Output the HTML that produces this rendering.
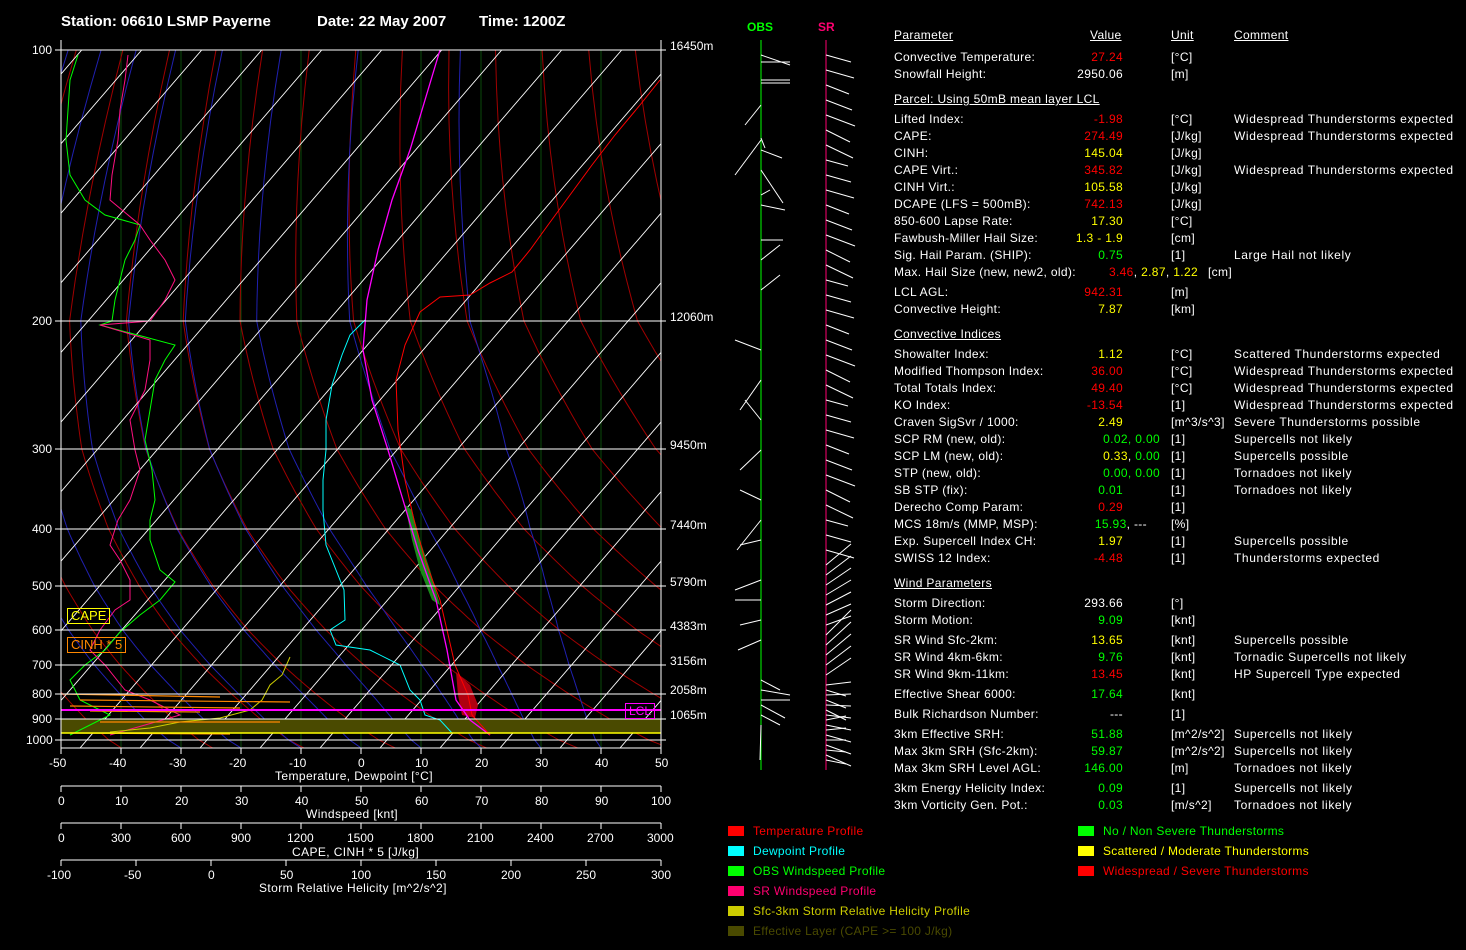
<!DOCTYPE html>
<html><head><meta charset="utf-8"><style>
body{margin:0;background:#000;width:1466px;height:950px;overflow:hidden;position:relative;font-family:"Liberation Sans",sans-serif;color:#fff}
.t{position:absolute;font-size:12px;white-space:nowrap;line-height:14px}
.r{position:absolute;left:894px;width:560px;height:14px;font-size:12px;line-height:14px;white-space:nowrap;letter-spacing:0.35px}
.r span{position:absolute}
.p{left:0}.v{right:331px;text-align:right}.u{left:277px}.c{left:340px;letter-spacing:0.6px}
.h{position:absolute;font-size:12px;text-decoration:underline;white-space:nowrap;letter-spacing:0.35px}
.R{color:#f00}.Y{color:#ff0}.G{color:#0f0}
b{font-weight:normal}
.leg{position:absolute;font-size:12px;white-space:nowrap;letter-spacing:0.3px}
.leg i{position:absolute;left:-25px;top:2px;width:16px;height:10px}
</style></head><body>
<svg id="s" width="1466" height="950" style="position:absolute;left:0;top:0">
<defs><clipPath id="cp"><rect x="61" y="50" width="600" height="698"/></clipPath></defs>
<g id="grid" clip-path="url(#cp)"></g>
<g clip-path="url(#cp)">
<rect x="61" y="719" width="600" height="14" fill="#4a4a00"/>
<polygon points="405,505 412,510 420,540 430,570 440,605 432,600 420,570 412,540" fill="#1a8a1a"/>
<polygon points="456,672 470,685 478,705 475,718 462,715 458,695" fill="#b00010"/>
<polyline fill="none" stroke="#f0f" stroke-width="1.3" points="440,50 425,100 410,150 392,200 378,250 367,300 363,350 372,400 388,450 403,500 418,550 436,600 447,650 456,700 470,720 490,735"/>
<polyline fill="none" stroke="#f00" stroke-width="1" points="660,80 640,105 615,135 592,165 570,195 548,225 530,250 512,272 490,283 470,295 440,297 420,312 405,345 396,380 398,430 405,480 414,520 425,560 440,600 447,630 455,665 468,695 472,715 490,735"/>
<polyline fill="none" stroke="#0ff" stroke-width="1" points="365,320 350,335 342,355 332,385 326,420 326,450 323,480 323,510 326,545 336,570 344,590 345,620 330,630 336,645 370,650 400,665 410,690 420,700 425,715 440,720 452,733"/>
<polyline fill="none" stroke="#0f0" stroke-width="1" points="78,55 70,80 68,110 66,140 70,175 85,200 105,215 140,225 135,240 125,260 120,280 115,300 112,321 100,325 175,345 165,360 155,380 150,410 145,440 152,470 155,500 150,520 150,540 160,570 175,582 160,600 140,615 120,632 105,650 85,665 70,680 80,700 110,715 90,725 70,735"/>
<polyline fill="none" stroke="#ff1080" stroke-width="1" points="128,55 125,80 120,110 118,140 112,175 110,200 140,225 150,240 165,260 175,280 165,300 150,321 100,325 150,340 150,360 145,390 130,420 135,450 140,470 130,500 118,520 110,545 120,560 130,580 130,600 115,610 100,630 90,650 105,665 125,690 150,700 180,715 145,725 110,735"/>
<polyline fill="none" stroke="#cc0" stroke-width="1" points="290,657 282,675 270,685 262,700 250,710 220,718 180,722 150,728 110,732"/>
<g stroke="#f80" stroke-width="1.2">
<line x1="61" y1="694" x2="220" y2="697"/><line x1="80" y1="700" x2="290" y2="702"/><line x1="70" y1="706" x2="240" y2="708"/><line x1="90" y1="711" x2="200" y2="712"/><line x1="100" y1="722" x2="280" y2="722"/><line x1="70" y1="733" x2="230" y2="734"/>
</g>
<line x1="61" y1="733" x2="661" y2="733" stroke="#ff0" stroke-width="1.5"/>
</g>
<line x1="61" y1="710" x2="661" y2="710" stroke="#f0f" stroke-width="2"/>
<g id="ax" stroke="#fff"></g>
<line x1="761" y1="40" x2="761" y2="770" stroke="#0f0"/>
<line x1="826" y1="40" x2="826" y2="770" stroke="#ff0070"/>
<g id="barbs" stroke="#fff" stroke-width="1"></g>
</svg>
<div class="t" style="left:61px;top:15px;font-size:15px;font-weight:bold">Station: 06610 LSMP Payerne</div>
<div class="t" style="left:317px;top:15px;font-size:15px;font-weight:bold">Date: 22 May 2007</div>
<div class="t" style="left:479px;top:15px;font-size:15px;font-weight:bold">Time: 1200Z</div>
<div class="t" style="left:747px;top:20px;color:#0f0;font-weight:bold">OBS</div>
<div class="t" style="left:818px;top:20px;color:#ff0070;font-weight:bold">SR</div>
<div class="t" style="left:32px;top:43px">100</div>
<div class="t" style="left:32px;top:314px">200</div>
<div class="t" style="left:32px;top:442px">300</div>
<div class="t" style="left:32px;top:522px">400</div>
<div class="t" style="left:32px;top:579px">500</div>
<div class="t" style="left:32px;top:623px">600</div>
<div class="t" style="left:32px;top:658px">700</div>
<div class="t" style="left:32px;top:687px">800</div>
<div class="t" style="left:32px;top:712px">900</div>
<div class="t" style="left:26px;top:733px">1000</div>
<div class="t" style="left:670px;top:39px">16450m</div>
<div class="t" style="left:670px;top:310px">12060m</div>
<div class="t" style="left:670px;top:438px">9450m</div>
<div class="t" style="left:670px;top:518px">7440m</div>
<div class="t" style="left:670px;top:575px">5790m</div>
<div class="t" style="left:670px;top:619px">4383m</div>
<div class="t" style="left:670px;top:654px">3156m</div>
<div class="t" style="left:670px;top:683px">2058m</div>
<div class="t" style="left:670px;top:708px">1065m</div>
<div class="t" style="left:67px;top:608px;color:#ff0;border:1px solid #ff0;padding:0 3px;font-size:13px">CAPE</div>
<div class="t" style="left:67px;top:637px;color:#f80;border:1px solid #f80;padding:0 3px;font-size:13px">CINH * 5</div>
<div class="t" style="left:625px;top:703px;color:#f0f;border:1px solid #f0f;padding:0 3px">LCL</div>
<div class="t" style="left:275px;top:769px;letter-spacing:0.4px">Temperature, Dewpoint [°C]</div>
<div class="t" style="left:306px;top:807px;letter-spacing:0.4px">Windspeed [knt]</div>
<div class="t" style="left:292px;top:845px;letter-spacing:0.4px">CAPE, CINH * 5 [J/kg]</div>
<div class="t" style="left:259px;top:881px;letter-spacing:0.4px">Storm Relative Helicity [m^2/s^2]</div>

<div class="leg" style="left:753px;top:824px;color:#f00"><i style="background:#f00"></i>Temperature Profile</div>
<div class="leg" style="left:753px;top:844px;color:#0ff"><i style="background:#0ff"></i>Dewpoint Profile</div>
<div class="leg" style="left:753px;top:864px;color:#0f0"><i style="background:#0f0"></i>OBS Windspeed Profile</div>
<div class="leg" style="left:753px;top:884px;color:#ff0070"><i style="background:#ff0070"></i>SR Windspeed Profile</div>
<div class="leg" style="left:753px;top:904px;color:#cc0"><i style="background:#cc0"></i>Sfc-3km Storm Relative Helicity Profile</div>
<div class="leg" style="left:753px;top:924px;color:#4a4a00"><i style="background:#4a4a00"></i>Effective Layer (CAPE &gt;= 100 J/kg)</div>
<div class="leg" style="left:1103px;top:824px;color:#0f0"><i style="background:#0f0"></i>No / Non Severe Thunderstorms</div>
<div class="leg" style="left:1103px;top:844px;color:#ff0"><i style="background:#ff0"></i>Scattered / Moderate Thunderstorms</div>
<div class="leg" style="left:1103px;top:864px;color:#f00"><i style="background:#f00"></i>Widespread / Severe Thunderstorms</div>

<div class="h" style="left:894px;top:28px">Parameter</div>
<div class="h" style="left:1090px;top:28px">Value</div>
<div class="h" style="left:1171px;top:28px">Unit</div>
<div class="h" style="left:1234px;top:28px">Comment</div>
<div class="r" style="top:50px"><span class="p">Convective Temperature:</span><span class="v R">27.24</span><span class="u">[°C]</span></div>
<div class="r" style="top:67px"><span class="p">Snowfall Height:</span><span class="v">2950.06</span><span class="u">[m]</span></div>
<div class="h" style="left:894px;top:92px">Parcel: Using 50mB mean layer LCL</div>
<div class="r" style="top:112px"><span class="p">Lifted Index:</span><span class="v R">-1.98</span><span class="u">[°C]</span><span class="c">Widespread Thunderstorms expected</span></div>
<div class="r" style="top:129px"><span class="p">CAPE:</span><span class="v R">274.49</span><span class="u">[J/kg]</span><span class="c">Widespread Thunderstorms expected</span></div>
<div class="r" style="top:146px"><span class="p">CINH:</span><span class="v Y">145.04</span><span class="u">[J/kg]</span></div>
<div class="r" style="top:163px"><span class="p">CAPE Virt.:</span><span class="v R">345.82</span><span class="u">[J/kg]</span><span class="c">Widespread Thunderstorms expected</span></div>
<div class="r" style="top:180px"><span class="p">CINH Virt.:</span><span class="v Y">105.58</span><span class="u">[J/kg]</span></div>
<div class="r" style="top:197px"><span class="p">DCAPE (LFS = 500mB):</span><span class="v R">742.13</span><span class="u">[J/kg]</span></div>
<div class="r" style="top:214px"><span class="p">850-600 Lapse Rate:</span><span class="v Y">17.30</span><span class="u">[°C]</span></div>
<div class="r" style="top:231px"><span class="p">Fawbush-Miller Hail Size:</span><span class="v Y">1.3 - 1.9</span><span class="u">[cm]</span></div>
<div class="r" style="top:248px"><span class="p">Sig. Hail Param. (SHIP):</span><span class="v G">0.75</span><span class="u">[1]</span><span class="c">Large Hail not likely</span></div>
<div class="r" style="top:265px"><span class="p">Max. Hail Size (new, new2, old):</span><span class="v" style="right:256px"><b class="R">3.46</b>, <b class="Y">2.87</b>, <b class="Y">1.22</b></span><span class="u" style="left:314px">[cm]</span></div>
<div class="r" style="top:285px"><span class="p">LCL AGL:</span><span class="v R">942.31</span><span class="u">[m]</span></div>
<div class="r" style="top:302px"><span class="p">Convective Height:</span><span class="v Y">7.87</span><span class="u">[km]</span></div>
<div class="h" style="left:894px;top:327px">Convective Indices</div>
<div class="r" style="top:347px"><span class="p">Showalter Index:</span><span class="v Y">1.12</span><span class="u">[°C]</span><span class="c">Scattered Thunderstorms expected</span></div>
<div class="r" style="top:364px"><span class="p">Modified Thompson Index:</span><span class="v R">36.00</span><span class="u">[°C]</span><span class="c">Widespread Thunderstorms expected</span></div>
<div class="r" style="top:381px"><span class="p">Total Totals Index:</span><span class="v R">49.40</span><span class="u">[°C]</span><span class="c">Widespread Thunderstorms expected</span></div>
<div class="r" style="top:398px"><span class="p">KO Index:</span><span class="v R">-13.54</span><span class="u">[1]</span><span class="c">Widespread Thunderstorms expected</span></div>
<div class="r" style="top:415px"><span class="p">Craven SigSvr / 1000:</span><span class="v Y">2.49</span><span class="u">[m^3/s^3]</span><span class="c">Severe Thunderstorms possible</span></div>
<div class="r" style="top:432px"><span class="p">SCP RM (new, old):</span><span class="v G" style="right:294px">0.02, 0.00</span><span class="u">[1]</span><span class="c">Supercells not likely</span></div>
<div class="r" style="top:449px"><span class="p">SCP LM (new, old):</span><span class="v" style="right:294px"><b class="Y">0.33</b>, <b class="G">0.00</b></span><span class="u">[1]</span><span class="c">Supercells possible</span></div>
<div class="r" style="top:466px"><span class="p">STP (new, old):</span><span class="v G" style="right:294px">0.00, 0.00</span><span class="u">[1]</span><span class="c">Tornadoes not likely</span></div>
<div class="r" style="top:483px"><span class="p">SB STP (fix):</span><span class="v G">0.01</span><span class="u">[1]</span><span class="c">Tornadoes not likely</span></div>
<div class="r" style="top:500px"><span class="p">Derecho Comp Param:</span><span class="v R">0.29</span><span class="u">[1]</span></div>
<div class="r" style="top:517px"><span class="p">MCS 18m/s (MMP, MSP):</span><span class="v" style="right:307px"><b class="G">15.93</b>, ---</span><span class="u">[%]</span></div>
<div class="r" style="top:534px"><span class="p">Exp. Supercell Index CH:</span><span class="v Y">1.97</span><span class="u">[1]</span><span class="c">Supercells possible</span></div>
<div class="r" style="top:551px"><span class="p">SWISS 12 Index:</span><span class="v R">-4.48</span><span class="u">[1]</span><span class="c">Thunderstorms expected</span></div>
<div class="h" style="left:894px;top:576px">Wind Parameters</div>
<div class="r" style="top:596px"><span class="p">Storm Direction:</span><span class="v">293.66</span><span class="u">[°]</span></div>
<div class="r" style="top:613px"><span class="p">Storm Motion:</span><span class="v G">9.09</span><span class="u">[knt]</span></div>
<div class="r" style="top:633px"><span class="p">SR Wind Sfc-2km:</span><span class="v Y">13.65</span><span class="u">[knt]</span><span class="c">Supercells possible</span></div>
<div class="r" style="top:650px"><span class="p">SR Wind 4km-6km:</span><span class="v G">9.76</span><span class="u">[knt]</span><span class="c">Tornadic Supercells not likely</span></div>
<div class="r" style="top:667px"><span class="p">SR Wind 9km-11km:</span><span class="v R">13.45</span><span class="u">[knt]</span><span class="c">HP Supercell Type expected</span></div>
<div class="r" style="top:687px"><span class="p">Effective Shear 6000:</span><span class="v G">17.64</span><span class="u">[knt]</span></div>
<div class="r" style="top:707px"><span class="p">Bulk Richardson Number:</span><span class="v">---</span><span class="u">[1]</span></div>
<div class="r" style="top:727px"><span class="p">3km Effective SRH:</span><span class="v G">51.88</span><span class="u">[m^2/s^2]</span><span class="c">Supercells not likely</span></div>
<div class="r" style="top:744px"><span class="p">Max 3km SRH (Sfc-2km):</span><span class="v G">59.87</span><span class="u">[m^2/s^2]</span><span class="c">Supercells not likely</span></div>
<div class="r" style="top:761px"><span class="p">Max 3km SRH Level AGL:</span><span class="v G">146.00</span><span class="u">[m]</span><span class="c">Tornadoes not likely</span></div>
<div class="r" style="top:781px"><span class="p">3km Energy Helicity Index:</span><span class="v G">0.09</span><span class="u">[1]</span><span class="c">Supercells not likely</span></div>
<div class="r" style="top:798px"><span class="p">3km Vorticity Gen. Pot.:</span><span class="v G">0.03</span><span class="u">[m/s^2]</span><span class="c">Tornadoes not likely</span></div>

<div class="t" style="left:49px;top:756px">-50</div><div class="t" style="left:109px;top:756px">-40</div><div class="t" style="left:169px;top:756px">-30</div><div class="t" style="left:229px;top:756px">-20</div><div class="t" style="left:289px;top:756px">-10</div><div class="t" style="left:358px;top:756px">0</div><div class="t" style="left:415px;top:756px">10</div><div class="t" style="left:475px;top:756px">20</div><div class="t" style="left:535px;top:756px">30</div><div class="t" style="left:595px;top:756px">40</div><div class="t" style="left:655px;top:756px">50</div>
<div class="t" style="left:58px;top:794px">0</div><div class="t" style="left:115px;top:794px">10</div><div class="t" style="left:175px;top:794px">20</div><div class="t" style="left:235px;top:794px">30</div><div class="t" style="left:295px;top:794px">40</div><div class="t" style="left:355px;top:794px">50</div><div class="t" style="left:415px;top:794px">60</div><div class="t" style="left:475px;top:794px">70</div><div class="t" style="left:535px;top:794px">80</div><div class="t" style="left:595px;top:794px">90</div><div class="t" style="left:651px;top:794px">100</div>
<div class="t" style="left:58px;top:831px">0</div><div class="t" style="left:111px;top:831px">300</div><div class="t" style="left:171px;top:831px">600</div><div class="t" style="left:231px;top:831px">900</div><div class="t" style="left:287px;top:831px">1200</div><div class="t" style="left:347px;top:831px">1500</div><div class="t" style="left:407px;top:831px">1800</div><div class="t" style="left:467px;top:831px">2100</div><div class="t" style="left:527px;top:831px">2400</div><div class="t" style="left:587px;top:831px">2700</div><div class="t" style="left:647px;top:831px">3000</div>
<div class="t" style="left:47px;top:868px">-100</div><div class="t" style="left:124px;top:868px">-50</div><div class="t" style="left:208px;top:868px">0</div><div class="t" style="left:280px;top:868px">50</div><div class="t" style="left:351px;top:868px">100</div><div class="t" style="left:426px;top:868px">150</div><div class="t" style="left:501px;top:868px">200</div><div class="t" style="left:576px;top:868px">250</div><div class="t" style="left:651px;top:868px">300</div>
<script>
var NS="http://www.w3.org/2000/svg";
function el(p,t,a){var e=document.createElementNS(NS,t);for(var k in a)e.setAttribute(k,a[k]);p.appendChild(e);return e;}
var g=document.getElementById('grid');
var P=[100,200,300,400,500,600,700,800,900,1000,1050],Y=[50,321,449,529,586,630,665,694,719,740,748];
function py(p){for(var i=0;i<P.length-1;i++)if(p<=P[i+1]){var f=Math.log(p/P[i])/Math.log(P[i+1]/P[i]);return Y[i]+f*(Y[i+1]-Y[i]);}return 748;}
function tx(T,y){return 61+(T+50)*6+0.85*(748-y);}
for(var k=0;k<=10;k++){var x=61+60*k;el(g,'line',{x1:x,y1:50,x2:x,y2:748,stroke:'#0a4a0a'});}
for(var th=230;th<=500;th+=15){var s="";for(var p=1050;p>=100;p-=10){var y=py(p),T=th*Math.pow(p/1000,0.286)-273.15;s+=tx(T,y).toFixed(1)+","+y.toFixed(1)+" ";}el(g,'polyline',{points:s,fill:'none',stroke:'#a00000'});}
for(var t0=-30;t0<=40;t0+=10){var s="",T=t0;for(var p=1050;p>=100;p-=10){var y=py(p);s+=tx(T,y).toFixed(1)+","+y.toFixed(1)+" ";var Tk=T+273.15;var es=6.11*Math.exp(17.27*T/(T+237.3));var r=0.622*es/p;var gm=(Tk*0.286/p)*(1+r*2.5e6/(287*Tk))/(1+r*2.5e6*2.5e6*0.622/(1004*461*Tk*Tk));T-=gm*10;}el(g,'polyline',{points:s,fill:'none',stroke:'#2020b0'});}
for(var x=-700;x<=661;x+=60){el(g,'line',{x1:x,y1:748,x2:x+698/1.16,y2:50,stroke:'#fff','stroke-width':0.9});}
var ax=document.getElementById('ax');
[50,321,449,529,586,630,665,694,719,740].forEach(function(y){el(ax,'line',{x1:55,y1:y,x2:666,y2:y,'stroke-width':1});});
el(ax,'line',{x1:61,y1:40,x2:61,y2:748});el(ax,'line',{x1:661,y1:40,x2:661,y2:748});el(ax,'line',{x1:61,y1:748,x2:661,y2:748});
for(var k=0;k<=10;k++){var x=61+60*k;el(ax,'line',{x1:x,y1:748,x2:x,y2:754});el(ax,'line',{x1:x,y1:786,x2:x,y2:792});el(ax,'line',{x1:x,y1:823,x2:x,y2:829});}
el(ax,'line',{x1:61,y1:786,x2:661,y2:786});el(ax,'line',{x1:61,y1:823,x2:661,y2:823});el(ax,'line',{x1:61,y1:860,x2:661,y2:860});
for(var k=0;k<=8;k++){var x=61+75*k;el(ax,'line',{x1:x,y1:860,x2:x,y2:866});}
var b=document.getElementById('barbs');
var ob=[[55,790,65],[62,790,62],[80,790,80],[83,790,83],[105,745,125],[140,735,175],[138,765,148],[150,782,158],[170,783,203],[195,770,190],[205,785,210],[240,783,240],[260,780,245],[290,780,275],[350,735,340],[380,740,410],[420,745,400],[450,740,470],[500,740,490],[520,737,550],[540,740,545],[580,735,590],[600,735,600],[620,740,625],[640,738,650],[680,780,690],[690,790,695],[700,790,700],[705,785,718],[715,780,725],[725,760,760]];
ob.forEach(function(a){el(b,'line',{x1:761,y1:a[0],x2:a[1],y2:a[2]});});
for(var y=55;y<=760;y+=(y<560?15:(y<680?10:5))){var dx,dy;
 if(y<560){dx=22+(y*13%8);dy=6+(y*7%8);}
 else if(y<680){dx=20+(y*11%10);dy=-8-(y*7%18);}
 else{dx=20+(y*7%10);dy=(y*5%16)-4;}
 el(b,'line',{x1:826,y1:y,x2:826+dx,y2:y+dy});}
</script>
</body></html>
